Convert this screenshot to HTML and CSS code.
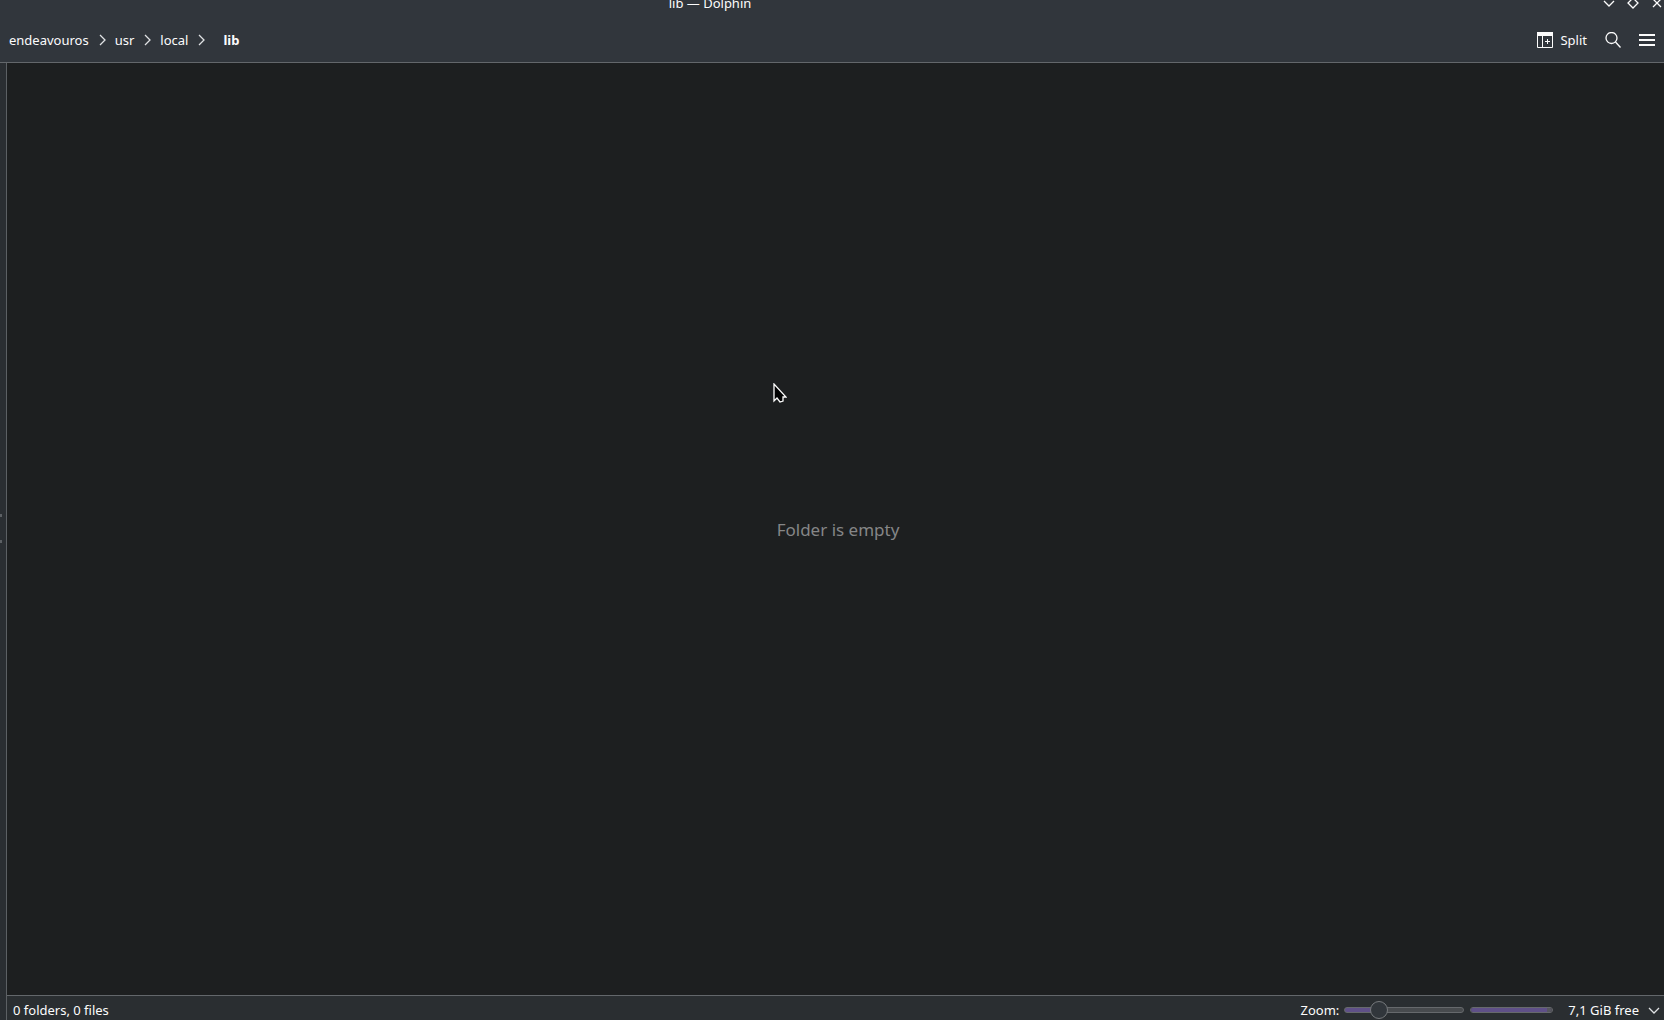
FILE: index.html
```html
<!DOCTYPE html>
<html lang="en">
<head>
  <meta charset="UTF-8" />
  <meta name="viewport" content="width=device-width, initial-scale=1.0"/>
  <title>lib — Dolphin</title>
  <link rel="stylesheet" href="styles.css">
</head>
<body>
  <header class="header">
    <div class="titlebar">
      <h1>lib — Dolphin</h1>
      <div class="window-buttons">
        <button aria-label="Minimize"><svg width="12" height="12" viewBox="0 0 12 12"><path d="M1 4l5 5 5-5"/></svg></button>
        <button aria-label="Maximize"><svg width="12" height="12" viewBox="0 0 12 12"><path d="M6 1l5 5-5 5-5-5z"/></svg></button>
        <button aria-label="Close"><svg width="12" height="12" viewBox="0 0 12 12"><path d="M2 2l8 8M10 2l-8 8"/></svg></button>
      </div>
    </div>

    <div class="toolbar">
      <nav class="breadcrumb">
        <a href="#">endeavouros</a>
        <svg width="8" height="12" viewBox="0 0 8 12"><path d="M2 1l5 5-5 5"/></svg>
        <a href="#">usr</a>
        <svg width="8" height="12" viewBox="0 0 8 12"><path d="M2 1l5 5-5 5"/></svg>
        <a href="#">local</a>
        <svg width="8" height="12" viewBox="0 0 8 12"><path d="M2 1l5 5-5 5"/></svg>
        <a href="#" class="current">lib</a>
      </nav>
      <div class="actions">
        <button class="split">
          <svg class="thin" width="16" height="16" viewBox="0 0 16 16">
            <path d="M.5 .5h15v15H.5zM5.5 4v11M8 9.5h5M10.500 7v5"/>
            <path class="solid" d="M0 0h16v4H0z"/>
          </svg>
          Split
        </button>
        <button aria-label="Search">
          <svg width="16" height="16" viewBox="0 0 16 16"><circle cx="6.500" cy="6" r="5.500"/><path d="M10.500 10l5 5.500"/></svg>
        </button>
        <button aria-label="Menu">
          <svg width="16" height="16" viewBox="0 0 16 16"><path class="solid" d="M0 2h16v2H0zM0 7h16v2H0zM0 12h16v2H0z"/></svg>
        </button>
      </div>
    </div>
  </header>

  <div class="body">
    <div class="splitter"><span></span><span></span></div>
    <div class="panel">
      <main class="view">
        <p>Folder is empty</p>
        <svg class="cursor" width="14" height="22" viewBox="0 0 14 22"><path d="M1 1v17l3-3 3 4 3-1v-4h3z"/></svg>
      </main>
      <footer class="statusbar">
        <span class="summary">0 folders, 0 files</span>
        <label for="zoom">Zoom:</label>
        <input type="range" id="zoom" min="0" max="100" value="25">
        <progress class="capacity" max="100" value="93" aria-label="Disk usage"></progress>
        <button class="free">
          7,1 GiB free
          <svg width="12" height="12" viewBox="0 0 12 12"><path d="M1 4l5 5 5-5"/></svg>
        </button>
      </footer>
    </div>
  </div>
</body>
</html>
```

FILE: styles.css
```css
* { margin: 0; padding: 0; box-sizing: border-box; }

body {
  height: 100vh;
  display: flex;
  flex-direction: column;
  overflow: hidden;
  font-family: 'Noto Sans', sans-serif;
  font-size: 13px;
  line-height: 18px;
  background: #1d1f20;
  color: #fcfcfc;
}

a { color: inherit; text-decoration: none; }

button {
  display: flex;
  align-items: center;
  border: none;
  background: none;
  color: inherit;
  font: inherit;
}

svg {
  display: block;
  flex: none;
  fill: none;
  stroke: #fcfcfc;
  stroke-width: 1.3;
}

.thin { stroke-width: 1; }

.solid {
  fill: #fcfcfc;
  stroke: none;
}

.header {
  background: #31363c;
  border-bottom: 1px solid #63676b;
}

/* the top of the title bar runs off the screen */
.titlebar {
  height: 18px;
  display: flex;
  align-items: center;
  margin-top: -6px;
}

.titlebar h1 {
  flex: 1;
  padding-right: 183px;
  font-size: 13px;
  font-weight: normal;
  text-align: center;
}

.window-buttons {
  display: flex;
  gap: 12px;
}

.window-buttons button:last-child { margin-right: 1px; }

.toolbar {
  height: 50px;
  display: flex;
  align-items: center;
  justify-content: space-between;
  padding: 6px 9px 0;
}

.breadcrumb {
  display: flex;
  align-items: center;
  gap: 9px;
}

.breadcrumb svg { stroke: #e0e2e4; }

.current {
  font-weight: bold;
  padding-left: 9px;
}

.actions {
  display: flex;
  gap: 18px;
}

.split { gap: 7px; }

.body {
  flex: 1;
  display: flex;
  min-height: 0;
}

.splitter {
  width: 7px;
  display: flex;
  flex-direction: column;
  justify-content: center;
  gap: 23px;
  padding-bottom: 26px;
  background: #2a2e32;
  border-right: 1px solid #5c6064;
}

.splitter span {
  width: 2px;
  height: 3px;
  background: #5c6064;
}

.panel {
  flex: 1;
  display: flex;
  flex-direction: column;
}

.view {
  position: relative;
  flex: 1;
  display: flex;
  align-items: center;
  justify-content: center;
  padding: 2px 0 0 5px;
}

.view p {
  font-size: 17px;
  line-height: 24px;
  color: #858687;
}

.cursor {
  position: absolute;
  left: 766px;
  top: 320px;
  fill: #000;
}

.statusbar {
  height: 25px;
  display: flex;
  align-items: center;
  padding: 3px 4px 0 6px;
  background: #2a2e31;
  border-top: 1px solid #63676b;
}

.summary { flex: 1; }

#zoom {
  width: 120px;
  height: 18px;
  margin: 0 6px 0 5px;
  appearance: none;
  background: none;
}

#zoom::-webkit-slider-runnable-track {
  height: 6px;
  border: 1px solid #66696c;
  border-radius: 3px;
  background: linear-gradient(to right, #5f5088 29%, #484b4e 29%);
}

#zoom::-webkit-slider-thumb {
  appearance: none;
  width: 18px;
  height: 18px;
  margin-top: -7px;
  border: 1px solid #76797c;
  border-radius: 50%;
  background: #31363b;
}

.capacity {
  width: 83px;
  height: 6px;
  margin-right: 15px;
  appearance: none;
  overflow: hidden;
  border: 1px solid #66696c;
  border-radius: 3px;
}

.capacity::-webkit-progress-bar { background: #56565f; }

.capacity::-webkit-progress-value { background: #5f5088; }

.free { gap: 9px; }

.free svg { stroke: #e0e2e4; }
```
